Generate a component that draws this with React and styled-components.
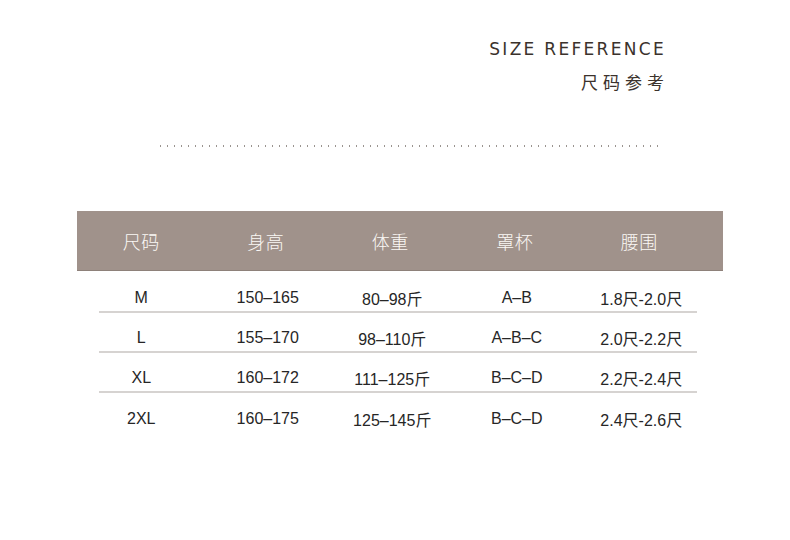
import React from 'react';
import styled, { createGlobalStyle } from 'styled-components';

const GlobalStyle = createGlobalStyle`
  html, body {
    margin: 0;
    padding: 0;
    background: #ffffff;
  }
  body {
    font-family: "Liberation Sans", "Noto Sans CJK SC", sans-serif;
  }
`;

const Page = styled.div`
  width: 790px;
  height: 540px;
  background: #fff;
  overflow: hidden;
  display: flex;
  flex-direction: column;
`;

const Heading = styled.div`
  display: flex;
  flex-direction: column;
  align-items: flex-end;
  padding: 38px 126px 0 0;
  color: #3b322c;
`;

const HeadingEn = styled.div`
  font-family: "DejaVu Sans", sans-serif;
  font-size: 17px;
  letter-spacing: 2.3px;
  line-height: 22px;
  margin-right: -2px;
`;

const HeadingCn = styled.div`
  font-family: "Noto Sans CJK SC", sans-serif;
  font-size: 17px;
  letter-spacing: 5px;
  line-height: 22px;
  margin-top: 11px;
  margin-right: -5px;
`;

const Dots = styled.div`
  margin: 52px 130px 0 157px;
  height: 2px;
  background-image: radial-gradient(circle, #9a948f 0.8px, transparent 1px);
  background-size: 7px 2px;
  background-repeat: repeat-x;
`;

const Table = styled.div`
  margin: 64px 67px 0 77px;
  display: flex;
  flex-direction: column;
`;

const HeadRow = styled.div`
  display: grid;
  grid-template-columns: repeat(5, 124.5px);
  padding-left: 2px;
  height: 59px;
  align-items: center;
  background: #a0928b;
  box-shadow: 0 1px 0 #8e817a;
`;

const HeadCell = styled.div`
  text-align: center;
  color: #fbf8f5;
  font-family: "Noto Sans CJK SC", serif;
  font-weight: 300;
  font-size: 18px;
  letter-spacing: 0.5px;
`;

const Row = styled.div`
  display: grid;
  grid-template-columns: repeat(5, 124.5px);
  height: 40px;
  padding-top: 12px;
  box-sizing: border-box;
  align-items: center;
  margin: ${p => (p.$first ? '3px' : '0')} 26px 0 22px;
  border-bottom: ${p => (p.$last ? 'none' : '2px solid #d6d3d1')};
`;

const Cell = styled.div`
  text-align: center;
  color: #262626;
  font-family: "Liberation Sans", "Noto Sans CJK SC", sans-serif;
  font-size: 16px;
  margin-left: ${p => (p.$first ? '-20px' : '-18px')};
  margin-right: ${p => (p.$first ? '20px' : '18px')};
`;

const rows = [
  ['M', '150–165', '80–98斤', 'A–B', '1.8尺-2.0尺'],
  ['L', '155–170', '98–110斤', 'A–B–C', '2.0尺-2.2尺'],
  ['XL', '160–172', '111–125斤', 'B–C–D', '2.2尺-2.4尺'],
  ['2XL', '160–175', '125–145斤', 'B–C–D', '2.4尺-2.6尺'],
];

const heads = ['尺码', '身高', '体重', '罩杯', '腰围'];

export default function App() {
  return (
    <Page>
      <GlobalStyle />
      <Heading>
        <HeadingEn>SIZE REFERENCE</HeadingEn>
        <HeadingCn>尺码参考</HeadingCn>
      </Heading>
      <Dots />
      <Table>
        <HeadRow>
          {heads.map(h => (
            <HeadCell key={h}>{h}</HeadCell>
          ))}
        </HeadRow>
        {rows.map((r, i) => (
          <Row key={r[0]} $first={i === 0} $last={i === rows.length - 1}>
            {r.map((c, j) => (
              <Cell key={j} $first={j === 0}>{c}</Cell>
            ))}
          </Row>
        ))}
      </Table>
    </Page>
  );
}
